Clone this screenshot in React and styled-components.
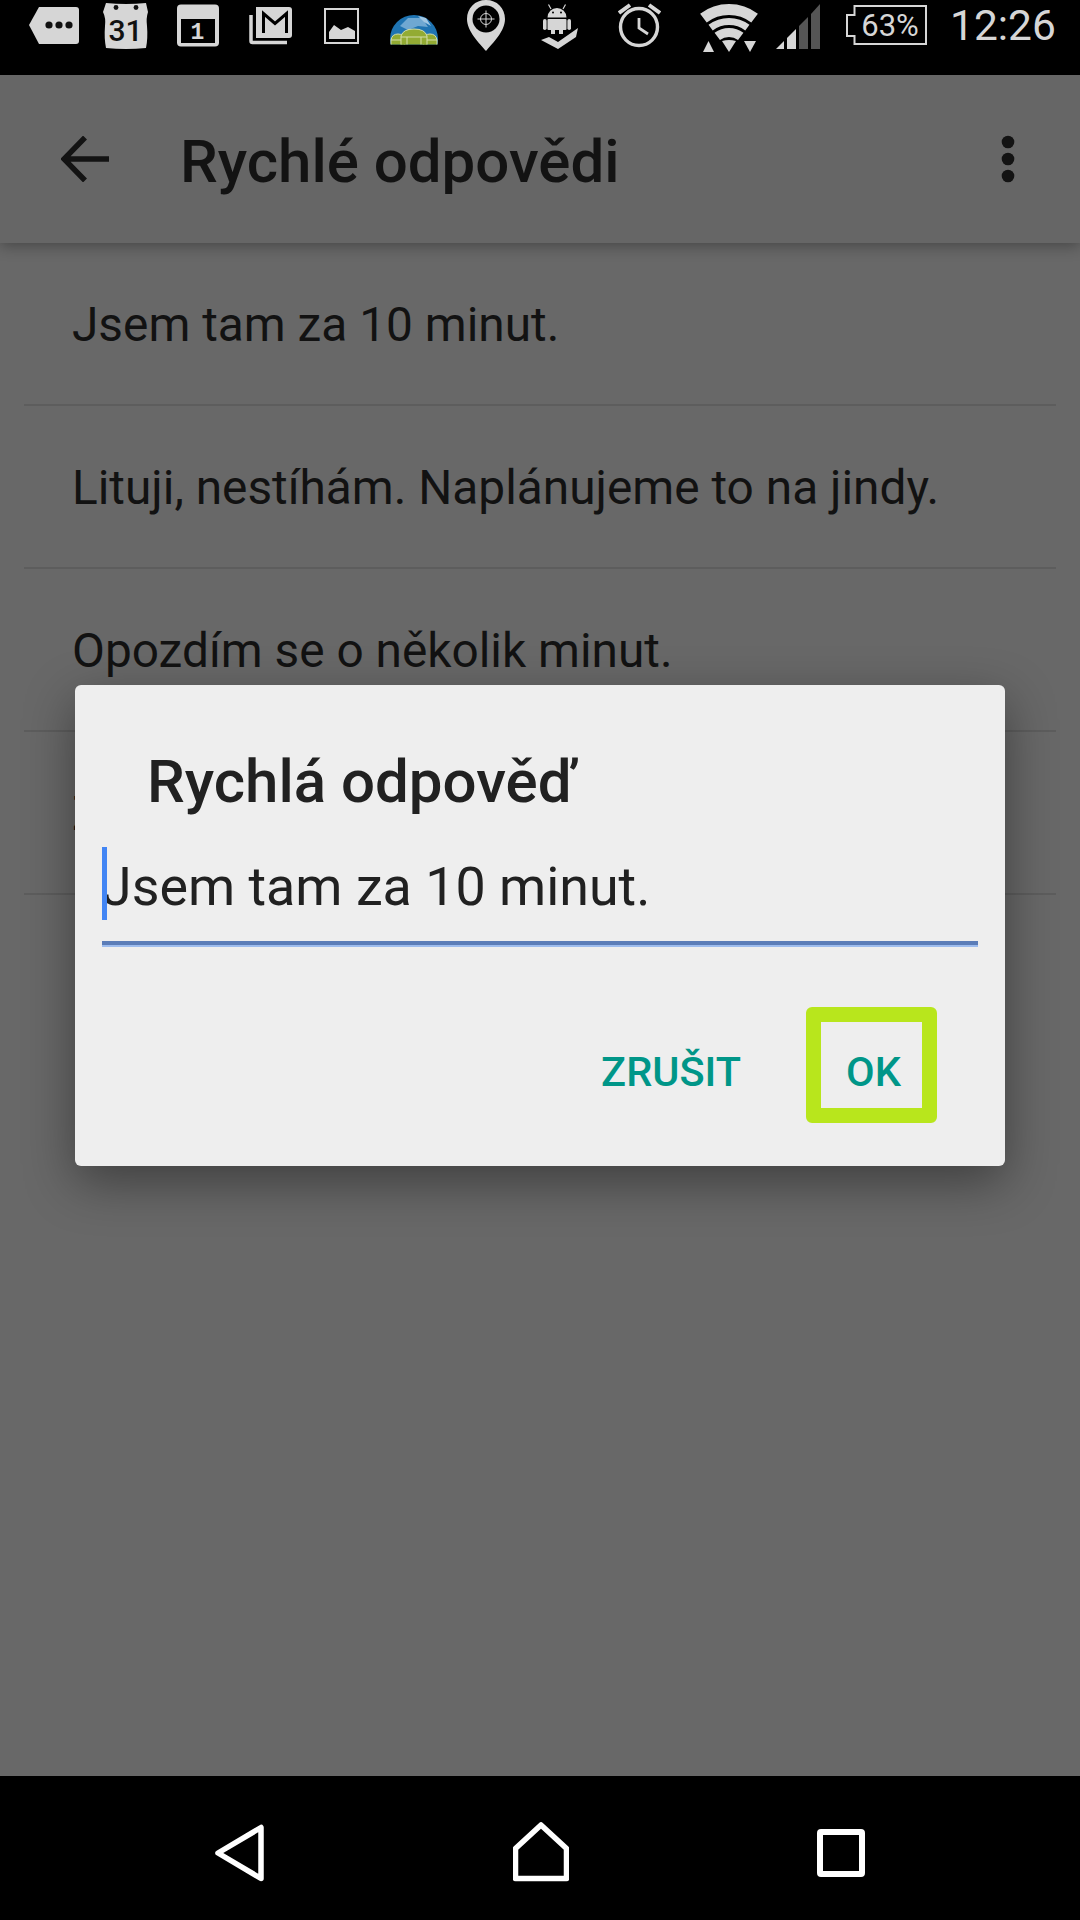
import React from "react";
import styled, { createGlobalStyle } from "styled-components";

const ICON = "#d6d6d6";

const GlobalStyle = createGlobalStyle`
  html, body {
    margin: 0;
    padding: 0;
    background: #686868;
  }
  body {
    font-family: Roboto, "Liberation Sans", sans-serif;
  }
`;

const Screen = styled.div`
  position: relative;
  display: flex;
  flex-direction: column;
  width: 1080px;
  height: 1920px;
  overflow: hidden;
  background: #686868;
`;

const StatusBar = styled.div`
  display: flex;
  align-items: flex-start;
  height: 75px;
  padding-left: 29px;
  background: #000;
  flex: none;
`;

const StatusIcon = styled.svg`
  display: block;
  flex: none;
  height: 56px;
  margin-left: ${p => p.$gap || 0}px;
`;

const Clock = styled.div`
  margin-left: 23px;
  font-size: 42.5px;
  line-height: 50px;
  margin-top: 1px;
  color: ${ICON};
`;

const AppBar = styled.header`
  position: relative;
  z-index: 1;
  display: flex;
  align-items: center;
  flex: none;
  height: 168px;
  padding: 0 0 0 61px;
  background: #666;
  box-shadow: 0 3px 14px rgba(0, 0, 0, 0.32);
`;

const BackArrow = styled.svg`
  display: block;
  flex: none;
`;

const AppTitle = styled.h1`
  flex: 1;
  margin: 5px 0 0 71px;
  font-size: 60px;
  font-weight: 500;
  line-height: 70px;
  color: #131313;
`;

const MoreDots = styled.svg`
  display: block;
  flex: none;
  margin-right: 65px;
`;

const List = styled.div`
  flex: 1;
`;

const Row = styled.div`
  display: flex;
  align-items: center;
  box-sizing: border-box;
  height: 163px;
  margin: 0 24px;
  padding: 3px 0 0 48px;
  border-bottom: 2px solid #5d5d5d;
  font-size: 47.8px;
  color: #121212;
`;

const NavBar = styled.nav`
  display: flex;
  justify-content: space-between;
  flex: none;
  height: 144px;
  padding: 46px 215px 0;
  box-sizing: border-box;
  background: #000;
`;

const NavIcon = styled.svg`
  display: block;
`;

const Dialog = styled.div`
  position: absolute;
  top: 685px;
  left: 75px;
  box-sizing: border-box;
  width: 930px;
  height: 481px;
  padding-top: 62px;
  border-radius: 6px;
  background: #eee;
  box-shadow: 0 16px 50px rgba(0, 0, 0, 0.4);
`;

const DialogTitle = styled.h2`
  margin: 0;
  padding-left: 72px;
  font-size: 60px;
  font-weight: 500;
  line-height: 70px;
  color: #212121;
`;

const Field = styled.div`
  position: relative;
  margin: 38px 27px 0;
  padding-bottom: 22px;
  border-bottom: 4px solid #5b7db8;
  box-shadow: 0 2px 0 #9dbcee;
  font-size: 53.8px;
  line-height: 64px;
  color: #212121;
`;

const Caret = styled.span`
  position: absolute;
  top: -8px;
  left: 0;
  width: 5px;
  height: 73px;
  background: #4285f4;
`;

const Actions = styled.div`
  display: flex;
  justify-content: flex-end;
  align-items: center;
  margin: 62px 68px 0 0;
`;

const TextButton = styled.button`
  display: block;
  margin: 0 0 0 ${p => p.$gap || 0}px;
  padding: 14px 0 0;
  border: 0;
  background: none;
  font-family: inherit;
  font-size: 41.5px;
  font-weight: 500;
  line-height: 48px;
  color: #009688;
`;

const HighlightedButton = styled(TextButton)`
  box-sizing: border-box;
  width: 131px;
  height: 116px;
  padding: 14px 0 0 4px;
  border: 15px solid #b8e61c;
  border-radius: 6px;
`;

const TagIcon = () => (
  <StatusIcon width="50" viewBox="0 0 50 56">
    <path d="M10 7H47a3 3 0 0 1 3 3V41a3 3 0 0 1-3 3H10L0 25Z" fill={ICON} />
    <circle cx="20" cy="25" r="3.6" fill="#111" />
    <circle cx="30" cy="25" r="3.6" fill="#111" />
    <circle cx="40" cy="25" r="3.6" fill="#111" />
  </StatusIcon>
);

const CalendarIcon = () => (
  <StatusIcon $gap={24} width="47" viewBox="0 0 47 56">
    <path
      d="M3 3Q23 5 43 3L45 12Q43 18 44 26Q45 38 43 48Q23 50 3 48Q1 38 2 26Q3 18 0 12Z"
      fill={ICON}
    />
    <circle cx="13" cy="7.5" r="2.4" fill="#111" />
    <circle cx="33" cy="7.5" r="2.4" fill="#111" />
    <text x="22.5" y="41" textAnchor="middle" fontFamily="Roboto" fontWeight="500" fontSize="30" fill="#111">
      31
    </text>
  </StatusIcon>
);

const DayIcon = () => (
  <StatusIcon $gap={27} width="42" viewBox="0 0 42 56">
    <rect x="0" y="4.5" width="42" height="42" rx="4" fill={ICON} />
    <rect x="4" y="19" width="34" height="24" fill="#000" />
    <text x="20.5" y="39" textAnchor="middle" fontFamily="Liberation Mono" fontWeight="700" fontSize="23" fill={ICON}>
      1
    </text>
  </StatusIcon>
);

const GmailIcon = () => (
  <StatusIcon $gap={30} width="43" viewBox="0 0 43 56">
    <path d="M7 7H40a3 3 0 0 1 3 3V35a3 3 0 0 1-3 3H7Z" fill={ICON} />
    <path d="M14.5 33V13.5L26 23.5L37.5 13.5V33" fill="none" stroke="#000" strokeWidth="3" />
    <path d="M2 15V41a1.5 1.5 0 0 0 1.5 1.5H38" fill="none" stroke={ICON} strokeWidth="3.5" />
  </StatusIcon>
);

const ImageIcon = () => (
  <StatusIcon $gap={32} width="35" viewBox="0 0 35 56">
    <rect x="1" y="9" width="33" height="34" fill="none" stroke={ICON} strokeWidth="2" />
    <path d="M5 39V32L10 25L17 30L24 27L31 31V39Z" fill={ICON} />
  </StatusIcon>
);

const GlobeIcon = () => (
  <StatusIcon $gap={31} width="48" viewBox="0 0 48 56">
    <defs>
      <clipPath id="dome">
        <rect x="0" y="0" width="48" height="44.5" />
      </clipPath>
    </defs>
    <g clipPath="url(#dome)">
      <circle cx="24" cy="39" r="24" fill="#1f74b2" />
      <path d="M10 26L18 18L32 18L38 27L28 26L18 30Z" fill="#6fa8d2" />
      <path d="M28 16L36 18L41 26L34 22Z" fill="#a0c6e2" />
      <g fill="#93ab33" stroke="#d5deaa" strokeWidth="1">
        <path d="M1 46V40Q2 34 8 34Q14 34 15 40V46Z" />
        <path d="M33 46V40Q34 34 40 34Q46 34 47 40V46Z" />
        <path d="M11 46V36Q13 29 24 29Q35 29 37 36V46Z" />
      </g>
      <path d="M11 37H37M17 37V46M31 37V46M1 40H11M37 40H47" stroke="#d5deaa" strokeWidth="1" />
    </g>
  </StatusIcon>
);

const PinIcon = () => (
  <StatusIcon $gap={29} width="38" viewBox="0 0 38 56">
    <path d="M19 0C30 0 38 8 38 19C38 31 26 43 19 51C12 43 0 31 0 19C0 8 8 0 19 0Z" fill={ICON} />
    <circle cx="19" cy="19" r="13.5" fill="#000" />
    <circle cx="19" cy="19" r="5.5" fill="none" stroke={ICON} strokeWidth="1" />
    <path d="M19 10.5V27.5M10.5 19H27.5" stroke={ICON} strokeWidth="1" />
  </StatusIcon>
);

const AndroidCheckIcon = () => (
  <StatusIcon $gap={36} width="37" viewBox="0 0 37 56">
    <g fill={ICON}>
      <path d="M6.5 17.5A9.5 9.5 0 0 1 25.5 17.5Z" />
      <path d="M10 9L7.5 4.5M22 9L24.5 4.5" stroke={ICON} strokeWidth="1.2" />
      <rect x="6.5" y="19" width="19" height="11" rx="1" />
      <rect x="2" y="19" width="3.6" height="11" rx="1.8" />
      <rect x="26.4" y="19" width="3.6" height="11" rx="1.8" />
      <rect x="10" y="29" width="4" height="5" />
      <rect x="18" y="29" width="4" height="5" />
      <path d="M0 40L8 37L17 42L37 28L35 37L17 49Z" />
    </g>
    <circle cx="12" cy="12.5" r="1" fill="#000" />
    <circle cx="20" cy="12.5" r="1" fill="#000" />
  </StatusIcon>
);

const AlarmIcon = () => (
  <StatusIcon $gap={40} width="43" viewBox="0 0 43 56">
    <circle cx="21" cy="27" r="18.5" fill="none" stroke={ICON} strokeWidth="3.4" />
    <path d="M1 13L12 5M31 5L42 13" stroke={ICON} strokeWidth="4" fill="none" />
    <path d="M21 18V28L30 34" stroke={ICON} strokeWidth="2.8" fill="none" />
  </StatusIcon>
);

// one ring of the wifi fan, drawn as a stroked arc round the bottom point
const wifiArc = r => {
  const dx = r * Math.sin((37 * Math.PI) / 180);
  const dy = r * Math.cos((37 * Math.PI) / 180);
  return `M${30 - dx} ${52 - dy}A${r} ${r} 0 0 1 ${30 + dx} ${52 - dy}`;
};

const WifiIcon = () => (
  <StatusIcon $gap={38} width="59" viewBox="0 0 59 56">
    <g fill="none" stroke={ICON}>
      <path d={wifiArc(42.5)} strokeWidth="11" />
      <path d={wifiArc(30.5)} strokeWidth="7" />
      <path d={wifiArc(19.5)} strokeWidth="9" />
    </g>
    <g fill={ICON}>
      <path d="M23 41Q30 39 37 41L30 52Z" />
      <path d="M4 52L9.5 41L15 52Z" />
      <path d="M45 41H57L51 52Z" />
    </g>
  </StatusIcon>
);

const SignalIcon = () => (
  <StatusIcon $gap={17} width="45" viewBox="0 0 45 56">
    <path d="M1 49L9 41V49Z" fill={ICON} />
    <path d="M12 38L21 29V49H12Z" fill={ICON} />
    <path d="M24 26L33 17V49H24Z" fill="#555" />
    <path d="M36 14L45 4V49H36Z" fill="#555" />
  </StatusIcon>
);

const BatteryIcon = () => (
  <StatusIcon $gap={26} width="81" viewBox="0 0 81 56">
    <path
      d="M8.5 6H80V44H8.5V36H1V15H8.5Z"
      fill="none"
      stroke={ICON}
      strokeWidth="2"
    />
    <text x="44" y="36" textAnchor="middle" fontFamily="Roboto" fontSize="31" fill={ICON}>
      63%
    </text>
  </StatusIcon>
);

const App = () => {
  return (
    <Screen>
      <GlobalStyle />
      <StatusBar>
        <TagIcon />
        <CalendarIcon />
        <DayIcon />
        <GmailIcon />
        <ImageIcon />
        <GlobeIcon />
        <PinIcon />
        <AndroidCheckIcon />
        <AlarmIcon />
        <WifiIcon />
        <SignalIcon />
        <BatteryIcon />
        <Clock>12:26</Clock>
      </StatusBar>
      <AppBar>
        <BackArrow width="48" height="46" viewBox="0 0 48 46">
          <path
            d="M48 23H4M24 1.5L3 23L24 44.5"
            fill="none"
            stroke="#131313"
            strokeWidth="5.5"
          />
        </BackArrow>
        <AppTitle>Rychlé odpovědi</AppTitle>
        <MoreDots width="14" height="48" viewBox="0 0 14 48">
          <circle cx="7" cy="7" r="6.3" fill="#131313" />
          <circle cx="7" cy="24" r="6.3" fill="#131313" />
          <circle cx="7" cy="41" r="6.3" fill="#131313" />
        </MoreDots>
      </AppBar>
      <List>
        <Row>Jsem tam za 10 minut.</Row>
        <Row>Lituji, nestíhám. Naplánujeme to na jindy.</Row>
        <Row>Opozdím se o několik minut.</Row>
        <Row>Začněte beze mě.</Row>
      </List>
      <NavBar>
        <NavIcon width="49" height="62" viewBox="0 0 49 62">
          <path
            d="M3 31L46 5.5V56.5Z"
            fill="none"
            stroke="#fff"
            strokeWidth="5.5"
            strokeLinejoin="round"
          />
        </NavIcon>
        <NavIcon width="56" height="62" viewBox="0 0 56 62">
          <path
            d="M28 3L53.5 26.5V56.5H2.5V26.5Z"
            fill="none"
            stroke="#fff"
            strokeWidth="5.5"
            strokeLinejoin="round"
          />
        </NavIcon>
        <NavIcon width="48" height="62" viewBox="0 0 48 62">
          <rect x="3" y="10" width="42" height="42" rx="1" fill="none" stroke="#fff" strokeWidth="6" />
        </NavIcon>
      </NavBar>
      <Dialog>
        <DialogTitle>Rychlá odpověď</DialogTitle>
        <Field>
          <Caret />
          Jsem tam za 10 minut.
        </Field>
        <Actions>
          <TextButton>ZRUŠIT</TextButton>
          <HighlightedButton $gap={65}>OK</HighlightedButton>
        </Actions>
      </Dialog>
    </Screen>
  );
};

export default App;
